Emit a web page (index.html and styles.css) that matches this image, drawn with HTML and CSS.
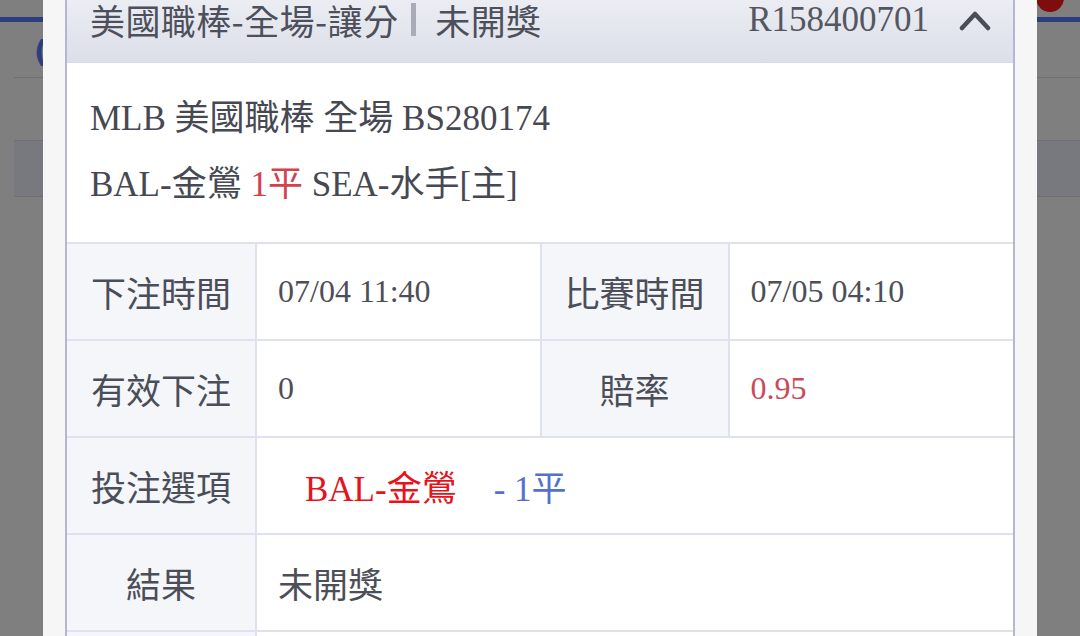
FILE: index.html
```html
<!DOCTYPE html>
<html>
<head>
  <meta charset="utf-8">
  <title>注單詳情</title>
  <link rel="stylesheet" href="styles.css">
</head>
<body>
  <!-- page underneath the popup -->
  <div class="page">
    <div class="page-top">
      <span class="badge"></span>
    </div>
    <div class="page-tools">
      <span class="tool-icon">(</span>
    </div>
    <div class="page-row"></div>
    <div class="page-row shade"></div>
    <div class="page-row tall"></div>
  </div>

  <div class="mask">
    <div class="dialog">
      <div class="bet-card">
        <div class="bet-head">
          <span class="bet-title">美國職棒-全場-讓分</span>
          <span class="bet-sep"></span>
          <span class="bet-title">未開獎</span>
          <span class="bet-no">R158400701</span>
          <svg class="chevron" viewBox="0 0 32 22">
            <polyline points="3,19 16,5 29,19" fill="none" stroke="#4a4d57" stroke-width="4.5" stroke-linecap="round" stroke-linejoin="round"/>
          </svg>
        </div>

        <div class="bet-info">
          <div>MLB 美國職棒 全場 BS280174</div>
          <div>BAL-金鶯 <span class="hcp">1平</span> SEA-水手[主]</div>
        </div>

        <table class="bet-table">
          <colgroup>
            <col class="c-label">
            <col class="c-value">
            <col class="c-label2">
            <col class="c-value">
          </colgroup>
          <tr>
            <th>下注時間</th>
            <td>07/04 11:40</td>
            <th>比賽時間</th>
            <td>07/05 04:10</td>
          </tr>
          <tr>
            <th>有效下注</th>
            <td>0</td>
            <th>賠率</th>
            <td class="odds">0.95</td>
          </tr>
          <tr>
            <th>投注選項</th>
            <td colspan="3">
              <span class="pick">BAL-金鶯</span><span class="pick-hcp">- 1平</span>
            </td>
          </tr>
          <tr>
            <th>結果</th>
            <td colspan="3" class="cjk">未開獎</td>
          </tr>
          <tr class="more">
            <th></th>
            <td colspan="3"></td>
          </tr>
        </table>
      </div>
    </div>
  </div>
</body>
</html>
```

FILE: styles.css
```css
html, body {
  margin: 0;
  height: 100%;
  overflow: hidden;
}

body {
  background: #ffffff;
  font-family: "Liberation Serif", "Noto Sans CJK TC", serif;
  color: #4b4e58;
}

/* PAGE BEHIND THE POPUP */
.page-top {
  position: relative;
  height: 17px;
  border-bottom: 5px solid #5a7cff;
}

.badge {
  position: absolute;
  top: -16px;
  right: 16px;
  width: 28px;
  height: 28px;
  border-radius: 50%;
  background: #ff1a1a;
}

.page-tools {
  height: 55px;
  margin-left: 14px;
  border-bottom: 1px solid #dedede;
}

.tool-icon {
  display: inline-block;
  margin: 12px 0 0 20px;
  font-family: "DejaVu Sans", sans-serif;
  font-size: 30px;
  font-weight: bold;
  color: #5a7cff;
}

.page-row {
  height: 62px;
  margin-left: 14px;
  border-bottom: 1px solid #dedede;
}

.page-row.shade {
  height: 55px;
  background: #f0f2fc;
}

.page-row.tall {
  height: 420px;
  border-bottom: none;
}

/* POPUP */
.mask {
  position: fixed;
  top: 0; left: 0;
  right: 0; bottom: 0;
  background: rgba(0, 0, 0, 0.5);
}

.dialog {
  margin: -23px 43px 0;
  padding: 0 22px 40px;
  background: #f6f6f6;
}

.bet-card {
  border-left: 2px solid #b5b6d6;
  border-right: 2px solid #b5b6d6;
  background: #ffffff;
}

.bet-head {
  display: flex;
  align-items: center;
  height: 85px;
  padding: 0 22px 0 23px;
  border-bottom: 1px solid #d6d9e4;
  background: linear-gradient(#f1f2f7, #dcdfe9);
  font-size: 35px;
  color: #4d505a;
}

.bet-title {
  font-family: "Noto Sans CJK TC", sans-serif;
  letter-spacing: 0.4px;
}

.bet-sep {
  width: 5px;
  height: 33px;
  margin: 0 19px 0 13px;
  background: #a9acb6;
}

.bet-no {
  margin-left: auto;
  font-size: 35px;
  color: #555760;
}

.chevron {
  width: 32px;
  height: 22px;
  margin-left: 30px;
}

.bet-info {
  padding: 23px 22px 24px 23px;
  font-size: 35px;
  line-height: 66px;
  color: #464852;
}

.hcp {
  color: #d4404f;
}

/* DETAIL TABLE */
.bet-table {
  width: 100%;
  border-collapse: collapse;
  table-layout: fixed;
}

.c-label { width: 189px; }
.c-label2 { width: 188px; }

.bet-table th,
.bet-table td {
  height: 95px;
  padding: 0;
  border-top: 2px solid #e0e1ef;
  border-left: 2px solid #e0e1ef;
}

.bet-table tr > :first-child {
  border-left: none;
}

.bet-table th {
  background: #f5f6fa;
  font-family: "Noto Sans CJK TC", sans-serif;
  font-weight: normal;
  font-size: 35px;
  color: #4b4e58;
  text-align: center;
}

.bet-table td {
  padding-left: 21px;
  font-size: 32px;
  color: #4d4f58;
}

.bet-table td.cjk {
  font-size: 35px;
}

.bet-table td.odds {
  color: #c94a5a;
}

.pick {
  margin-left: 27px;
  font-size: 35px;
  color: #e8121a;
}

.pick-hcp {
  margin-left: 37px;
  font-size: 35px;
  color: #5470d0;
}
```
